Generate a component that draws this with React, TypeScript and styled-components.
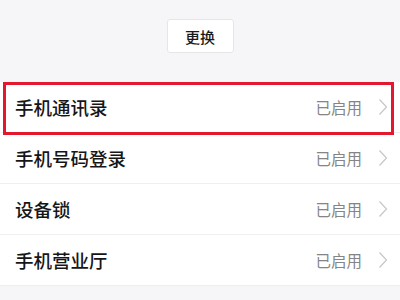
import React from "react";
import styled, { createGlobalStyle, css } from "styled-components";

const Global = createGlobalStyle`
  html, body { margin: 0; padding: 0; background: #f6f6f8; }
  body { font-family: "Noto Sans CJK SC", "Noto Sans", sans-serif; }
`;

const Page = styled.div`
  width: 400px;
  height: 300px;
  background: #f6f6f8;
  display: flex;
  flex-direction: column;
  overflow: hidden;
`;

const Top = styled.div`
  height: 82px;
  display: flex;
  justify-content: center;
  padding-top: 19px;
  box-sizing: border-box;
`;

const SwapButton = styled.button`
  width: 67px;
  height: 34px;
  background: #ffffff;
  border: 1px solid #e6e6e8;
  border-radius: 3px;
  font-family: inherit;
  font-size: 15px;
  font-weight: 500;
  color: #1a1a1a;
  padding: 0;
  cursor: pointer;
`;

const List = styled.div`
  display: flex;
  flex-direction: column;
  background: #ffffff;
`;

const Row = styled.div<{ $highlight?: boolean }>`
  position: relative;
  height: 50px;
  display: flex;
  align-items: center;
  padding: 0 12px 0 15px;
  border-bottom: 1px solid #efeff1;
  ${(p) =>
    p.$highlight &&
    css`
      &::after {
        content: "";
        position: absolute;
        left: 3px;
        right: 6px;
        top: 0;
        bottom: -3px;
        border: 3px solid #e3172d;
        pointer-events: none;
      }
    `}
`;

const Title = styled.span`
  flex: 1;
  font-size: 18.5px;
  font-weight: 500;
  color: #161616;
`;

const Status = styled.span`
  font-size: 15.5px;
  color: #858585;
  margin-right: 16px;
`;

const Chevron = () => (
  <svg width="10" height="18" viewBox="0 0 10 18" fill="none">
    <path d="M1.5 1.5 L8.5 9 L1.5 16.5" stroke="#c6c6c8" strokeWidth="1.2" />
  </svg>
);

const items = ["手机通讯录", "手机号码登录", "设备锁", "手机营业厅"];

export default function App() {
  return (
    <Page>
      <Global />
      <Top>
        <SwapButton>更换</SwapButton>
      </Top>
      <List>
        {items.map((t, i) => (
          <Row key={t} $highlight={i === 0}>
            <Title>{t}</Title>
            <Status>已启用</Status>
            <Chevron />
          </Row>
        ))}
      </List>
    </Page>
  );
}
